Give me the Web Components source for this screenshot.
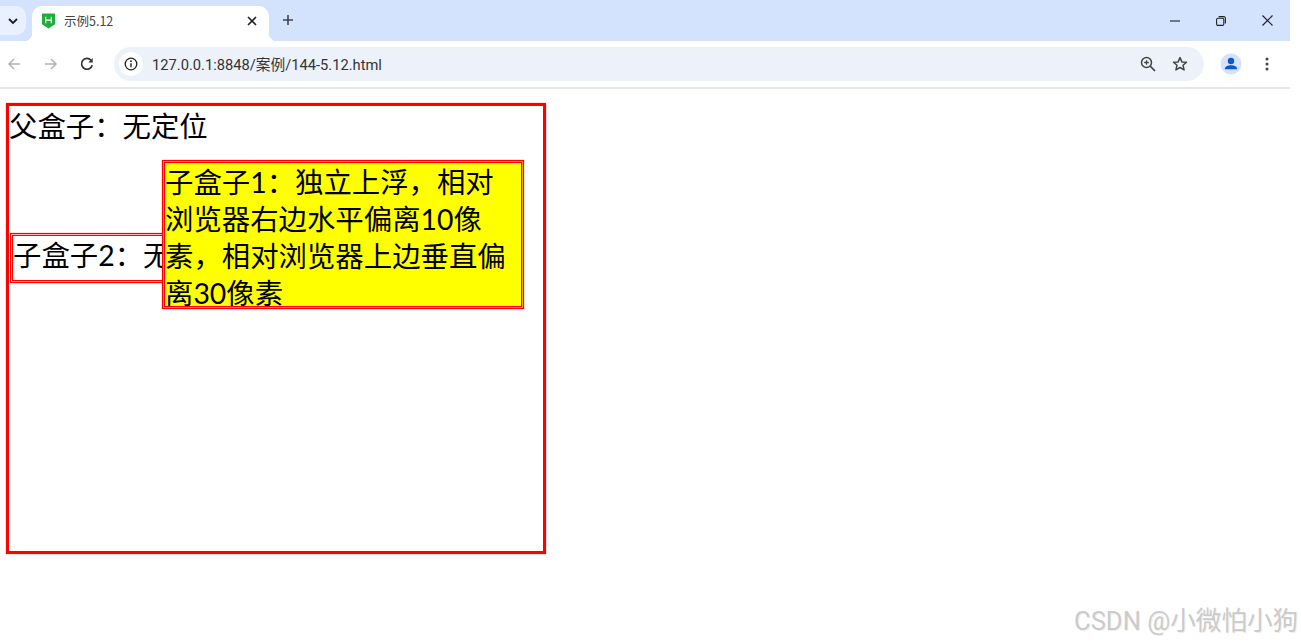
<!DOCTYPE html>
<html lang="zh-CN">
<head>
<meta charset="utf-8">
<title>示例5.12</title>
<style>
  html, body { margin: 0; background: #fff; }
  body { width: 1301px; height: 643px; overflow: hidden; position: relative; font-family: "Noto Sans CJK SC", sans-serif; }
</style>
</head>
<body>
<browser-chrome tab-title="示例5.12" url="127.0.0.1:8848/案例/144-5.12.html"></browser-chrome>
<demo-page>
  <parent-box>
    父盒子：无定位
    <child-box kind="float">子盒子1：独立上浮，相对浏览器右边水平偏离10像素，相对浏览器上边垂直偏离30像素</child-box>
    <child-box kind="flow">子盒子2：无</child-box>
  </parent-box>
</demo-page>
<water-mark>CSDN @小微怕小狗</water-mark>

<script>
// browser frame: tab strip + toolbar
class BrowserChrome extends HTMLElement {
  constructor() {
    super();
    this.attachShadow({ mode: "open" });
  }

  connectedCallback() {
    const title = this.getAttribute("tab-title");
    const url = this.getAttribute("url");
    this.shadowRoot.innerHTML = `
      <style>
        :host { display: block; width: 1290px; font-family: "Noto Sans CJK SC", sans-serif; }
        svg { display: block; fill: none; }
        .strip { display: flex; height: 41px; background: #d3e3fd; }
        .list { width: 26px; height: 29px; margin-top: 6px; background: #e9f1fe; border-radius: 0 10px 10px 0;
          display: flex; align-items: center; justify-content: center; }
        .tab { width: 237px; height: 35px; box-sizing: border-box; padding-bottom: 5px; margin: 6px 0 0 6px; background: #fff; border-radius: 10px 10px 0 0;
          display: flex; align-items: center; position: relative; }
        .tab::before, .tab::after { content: ""; position: absolute; bottom: 0; width: 8px; height: 8px; }
        .tab::before { left: -8px; background: radial-gradient(circle at 0 0, transparent 8px, #fff 8.5px); }
        .tab::after { right: -8px; background: radial-gradient(circle at 100% 0, transparent 8px, #fff 8.5px); }
        .favicon { margin-left: 10px; }
        .title { margin-left: 9px; font: 12.5px/16px "Noto Sans CJK SC", sans-serif; color: #444; flex: 1; }
        .x { margin-right: 12px; }
        .plus { margin: 14px 0 0 13px; }
        .win { margin-left: auto; display: flex; align-items: center; height: 41px; }
        .win span { display: flex; width: 46px; justify-content: center; }
        .bar { display: flex; align-items: center; height: 46px; background: #fff; border-radius: 0 8px 0 0; }
        .btn { width: 28px; height: 28px; display: flex; align-items: center; justify-content: center; flex: none; }
        .fwd { margin-left: 9px; }
        .rel { margin-left: 8px; }
        .addr { width: 1090px; height: 34px; margin-left: 13px; background: #edf2fa; border-radius: 17px;
          display: flex; align-items: center; flex: none; }
        .info { width: 24px; height: 24px; margin-left: 5px; background: #fff; border-radius: 50%;
          display: flex; align-items: center; justify-content: center; }
        .url { margin-left: 9px; padding-top: 1px; font: 14.7px/20px Roboto, "Noto Sans CJK SC", sans-serif; color: #333; flex: 1; }
        .zoom { margin-right: 4px; }
        .star { margin-right: 10px; }
        .user { margin-left: 13px; }
        .menu { margin-left: 8px; }
        .line { height: 2px; background: #e6e6e6; }
      </style>
      <div class="strip">
        <div class="list">
          <svg width="12" height="12" viewBox="0 0 12 12"><path d="M2 4l4 4 4-4" stroke="#1f1f1f" stroke-width="1.8"/></svg>
        </div>
        <div class="tab">
          <svg class="favicon" width="13" height="16" viewBox="0 0 14 16">
            <path d="M0 0h14v11.5L7 16 0 11.5z" fill="#1fae3c"/>
            <path d="M4 3.5v7M10 3.5v7M4 7h6" stroke="#fff" stroke-width="1.2"/>
          </svg>
          <span class="title">${title}</span>
          <svg class="x" width="10" height="10" viewBox="0 0 10 10"><path d="M1 1l8 8M9 1l-8 8" stroke="#1f1f1f" stroke-width="1.6"/></svg>
        </div>
        <svg class="plus" width="12" height="12" viewBox="0 0 12 12"><path d="M6 1v10M1 6h10" stroke="#444" stroke-width="1.6"/></svg>
        <div class="win">
          <span><svg width="10" height="10" viewBox="0 0 10 10"><path d="M0 5h10" stroke="#222" stroke-width="1.1"/></svg></span>
          <span><svg width="10" height="10" viewBox="0 0 10 10"><rect x=".6" y="2.2" width="7.2" height="7.2" rx="1.4" stroke="#222" stroke-width="1.1"/><path d="M2.6 .6h5.2a1.6 1.6 0 0 1 1.6 1.6v5.2" stroke="#222" stroke-width="1.1"/></svg></span>
          <span><svg width="11" height="11" viewBox="0 0 11 11"><path d="M.5 .5l10 10M10.5 .5l-10 10" stroke="#222" stroke-width="1.2"/></svg></span>
        </div>
      </div>
      <div class="bar">
        <div class="btn"><svg width="14" height="14" viewBox="0 0 14 14"><path d="M13 7H2M7 2L2 7l5 5" stroke="#b0b3b6" stroke-width="1.5"/></svg></div>
        <div class="btn fwd"><svg width="14" height="14" viewBox="0 0 14 14"><path d="M1 7h11M7 2l5 5-5 5" stroke="#b0b3b6" stroke-width="1.5"/></svg></div>
        <div class="btn rel"><svg width="14" height="14" viewBox="0 0 14 14"><path d="M12.2 8.2A5.4 5.4 0 1 1 11 3.2" stroke="#333" stroke-width="1.7"/><path d="M12.7 1v4.4h-4.4z" fill="#333"/></svg></div>
        <div class="addr">
          <div class="info"><svg width="14" height="14" viewBox="0 0 14 14"><circle cx="7" cy="7" r="5.8" stroke="#222" stroke-width="1.3"/><path d="M7 6.2v4" stroke="#222" stroke-width="1.4"/><circle cx="7" cy="4.2" r=".9" fill="#222"/></svg></div>
          <span class="url">${url}</span>
          <div class="btn zoom"><svg width="16" height="16" viewBox="0 0 16 16"><circle cx="6.5" cy="6.5" r="5" stroke="#444" stroke-width="1.5"/><path d="M10.2 10.2L15 15" stroke="#444" stroke-width="1.7"/><path d="M4.2 6.5h4.6M6.5 4.2v4.6" stroke="#444" stroke-width="1.3"/></svg></div>
          <div class="btn star"><svg width="16" height="16" viewBox="0 0 16 16"><path d="M8 1.6l1.9 4.3 4.6.4-3.5 3 1.1 4.6L8 11.5l-4.1 2.4L5 9.3l-3.5-3 4.6-.4z" stroke="#444" stroke-width="1.5" stroke-linejoin="round"/></svg></div>
        </div>
        <div class="btn user"><svg width="22" height="22" viewBox="0 0 22 22"><circle cx="11" cy="11" r="10.5" fill="#d3e3fd"/><circle cx="11" cy="8" r="3.2" fill="#0b57d0"/><path d="M4.8 16.2c0-2.6 3-3.9 6.2-3.9s6.2 1.3 6.2 3.9z" fill="#0b57d0"/></svg></div>
        <div class="btn menu"><svg width="4" height="14" viewBox="0 0 4 14"><circle cx="2" cy="2" r="1.5" fill="#444"/><circle cx="2" cy="7" r="1.5" fill="#444"/><circle cx="2" cy="12" r="1.5" fill="#444"/></svg></div>
      </div>
      <div class="line"></div>
    `;
  }
}

// page area under the browser frame
class DemoPage extends HTMLElement {
  constructor() {
    super();
    this.attachShadow({ mode: "open" }).innerHTML = `
      <style>
        :host { display: block; padding: 14px 0 0 6px; }
      </style>
      <slot></slot>
    `;
  }
}

class ParentBox extends HTMLElement {
  constructor() {
    super();
    this.attachShadow({ mode: "open" }).innerHTML = `
      <style>
        :host {
          display: block; position: relative; box-sizing: border-box;
          width: 540px; height: 451px; border: 3px solid #f00;
          box-shadow: 0 0 1px rgba(255, 0, 0, .7);
          color: #000;
          font: 28.4px/40px Lato, "Noto Sans CJK SC", sans-serif;
        }
      </style>
      <slot></slot>
    `;
  }
}

class ChildBox extends HTMLElement {
  constructor() {
    super();
    this.attachShadow({ mode: "open" }).innerHTML = `
      <style>
        /* 3 red-ish lines made of a border and two inset shadows */
        :host {
          display: block; box-sizing: border-box;
          border: 1px solid #f00;
          box-shadow: inset 0 0 0 1px var(--mid), inset 0 0 0 2px #f00, 0 0 1px rgba(255, 0, 0, .7);
        }
        :host([kind="flow"]) {
          --mid: #ffb0b0;
          width: 350px; height: 50px; margin: 87px 0 0 1px; padding: 2px 0 0 2px; line-height: 38px;
        }
        /* the floated one sits above its sibling */
        :host([kind="float"]) {
          --mid: #ff9a00;
          position: absolute; top: 54px; left: 153px; z-index: 1;
          width: 362px; height: 149px; padding: 3px 4px 0 2px;
          background: #ff0; line-height: 37px;
        }
      </style>
      <slot></slot>
    `;
  }
}

class WaterMark extends HTMLElement {
  constructor() {
    super();
    this.attachShadow({ mode: "open" }).innerHTML = `
      <style>
        :host {
          position: absolute; left: 1074px; top: 604px; white-space: nowrap;
          font: 25.6px/34px Roboto, "Noto Sans CJK SC", sans-serif;
          color: #cbcbcb; text-shadow: 1px 1px 1px #eee;
        }
      </style>
      <slot></slot>
    `;
  }
}

customElements.define("browser-chrome", BrowserChrome);
customElements.define("demo-page", DemoPage);
customElements.define("parent-box", ParentBox);
customElements.define("child-box", ChildBox);
customElements.define("water-mark", WaterMark);
</script>
</body>
</html>
